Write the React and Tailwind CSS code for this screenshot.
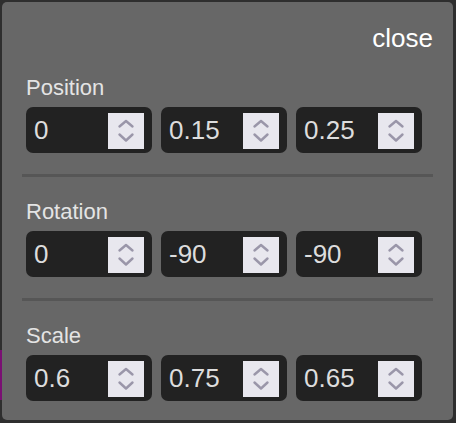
import React from "react";

function Spinner() {
  return (
    <div className="mr-2 mt-[6px] self-start w-9 h-9 bg-[#e8e7ee] shrink-0">
      <svg width="36" height="36" viewBox="0 0 36 36" fill="none">
        <path d="M11.5 13.5 L18 8 L24.5 13.5" stroke="#9a96a9" strokeWidth="2.4" strokeLinecap="round" strokeLinejoin="round" />
        <path d="M11.5 21.5 L18 27.5 L24.5 21.5" stroke="#9a96a9" strokeWidth="2.4" strokeLinecap="round" strokeLinejoin="round" />
      </svg>
    </div>
  );
}

function NumInput({ value }) {
  return (
    <div className="w-[126px] h-[46px] rounded-[7px] bg-[#222222] flex items-center justify-between">
      <span className="pl-2 text-[26px] leading-[30px] text-[#dddddd]">{value}</span>
      <Spinner />
    </div>
  );
}

function Section({ label, values, first }) {
  return (
    <div className={first ? "mt-[23px]" : "mt-[23px]"}>
      <div className="pl-1 text-[22px] leading-[24px] text-[#e4e4e4]">{label}</div>
      <div className="pl-1 mt-[7px] flex gap-[9px]">
        {values.map((v, i) => (
          <NumInput key={i} value={v} />
        ))}
      </div>
    </div>
  );
}

function Divider() {
  return <div className="mt-[21px] h-[3px] bg-[#565656]" />;
}

export default function App() {
  return (
    <div className="relative w-[456px] h-[423px] bg-[#2e2e2e] overflow-hidden font-['Liberation_Sans',Arial,sans-serif]">
      <div className="absolute left-0 top-[350px] w-[3px] h-[50px] bg-[#7a0f73]" />
      <div className="relative ml-[2px] pt-[2px]">
        <div className="w-[451px] h-[418px] bg-[#676767] rounded-[5px] px-5 pt-[21px]">
          <div className="flex justify-end text-[26px] leading-[30px] h-[30px] text-white">close</div>
          <Section label="Position" values={["0", "0.15", "0.25"]} first />
          <Divider />
          <Section label="Rotation" values={["0", "-90", "-90"]} />
          <Divider />
          <Section label="Scale" values={["0.6", "0.75", "0.65"]} />
        </div>
      </div>
    </div>
  );
}
